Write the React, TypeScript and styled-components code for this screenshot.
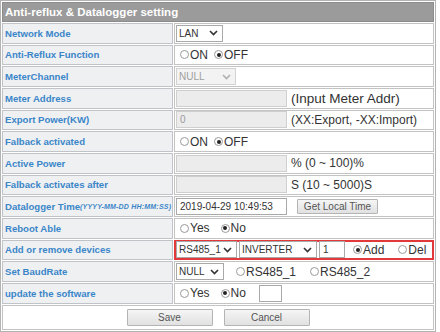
import React from "react";
import styled, { createGlobalStyle } from "styled-components";

const GlobalStyle = createGlobalStyle`
  html, body { margin: 0; padding: 0; background: #fff; }
  body { font-family: "Liberation Sans", Arial, sans-serif; }
  * { box-sizing: border-box; }
`;

const Panel = styled.div`
  width: 436px;
  display: grid;
  grid-template-columns: 171px 260px;
  grid-template-rows: 20px repeat(13, 20.67px) 25px;
  gap: 1px;
  padding: 1px;
  border: 1px solid #b3b3b3;
  background: #fff;
`;

const Header = styled.div`
  grid-column: 1 / -1;
  background: #9b9b9b;
  border: 1px solid #8c8c8c;
  color: #fff;
  font-weight: bold;
  font-size: 11.5px;
  padding: 0 2px;
  display: flex;
  align-items: center;
`;

const LabelCell = styled.div`
  background: #eef0f2;
  border: 1px solid #c0c4c8;
  color: #3b86c9;
  font-weight: bold;
  font-size: 9.6px;
  padding-left: 2px;
  display: flex;
  align-items: center;
  white-space: nowrap;
  overflow: hidden;
`;

const Small = styled.span`
  font-size: 7px;
  font-style: italic;
  letter-spacing: 0.2px;
`;

const ValueCell = styled.div<{ $highlight?: boolean }>`
  background: #fff;
  border: ${(p) => (p.$highlight ? "2px solid #e23a3a" : "1px solid #c3c3c3")};
  display: flex;
  align-items: center;
  padding-left: ${(p) => (p.$highlight ? 0 : 1)}px;
  color: #333;
  font-size: 12px;
  white-space: nowrap;
`;

const SelectBox = styled.div<{ $w: number; $disabled?: boolean; $ml?: number }>`
  width: ${(p) => p.$w}px;
  height: 17px;
  margin-left: ${(p) => p.$ml ?? 0}px;
  flex-shrink: 0;
  border: 1px solid ${(p) => (p.$disabled ? "#d2d2d2" : "#a9a9a9")};
  background: ${(p) => (p.$disabled ? "#f3f3f3" : "#fff")};
  color: ${(p) => (p.$disabled ? "#a0a0a0" : "#333")};
  font-size: 10px;
  display: flex;
  align-items: center;
  justify-content: space-between;
  padding: 0 4px 0 2px;
`;

const TextInput = styled.input<{ $w: number; $disabled?: boolean; $ml?: number }>`
  width: ${(p) => p.$w}px;
  height: 17px;
  margin: 0 0 0 ${(p) => p.$ml ?? 0}px;
  flex-shrink: 0;
  border: 1px solid ${(p) => (p.$disabled ? "#cfcfcf" : "#a9a9a9")};
  background: ${(p) => (p.$disabled ? "#ececec" : "#fff")};
  color: ${(p) => (p.$disabled ? "#9a9a9a" : "#333")};
  font-family: "Liberation Sans", Arial, sans-serif;
  font-size: 10px;
  padding: 0 3px;
  outline: none;
`;

const Note = styled.span<{ $size?: number }>`
  margin-left: 4px;
  font-size: ${(p) => p.$size ?? 12}px;
  color: #333;
`;

const Group = styled.div<{ $gap: number; $ml?: number }>`
  display: flex;
  align-items: center;
  gap: ${(p) => p.$gap}px;
  margin-left: ${(p) => p.$ml ?? 0}px;
`;

const Option = styled.span`
  display: inline-flex;
  align-items: center;
  gap: 1px;
  font-size: 12px;
  color: #333;
`;

const RadioDot = styled.span<{ $checked?: boolean }>`
  width: 9px;
  height: 9px;
  border-radius: 50%;
  border: 1px solid #9a9a9a;
  background: #fff;
  position: relative;
  flex-shrink: 0;
  &::after {
    content: "";
    display: ${(p) => (p.$checked ? "block" : "none")};
    position: absolute;
    inset: 1.5px;
    border-radius: 50%;
    background: #222;
  }
`;

const Btn = styled.button<{ $w: number; $h: number; $ml?: number }>`
  width: ${(p) => p.$w}px;
  height: ${(p) => p.$h}px;
  margin-left: ${(p) => p.$ml ?? 0}px;
  border: 1px solid #b4b4b4;
  border-radius: 1px;
  background: linear-gradient(#f5f5f5, #e1e1e1);
  font-family: "Liberation Sans", Arial, sans-serif;
  font-size: 10px;
  color: #555;
  padding: 0;
`;

const ButtonRow = styled.div`
  grid-column: 1 / -1;
  border: 1px solid #c3c3c3;
  display: flex;
  justify-content: center;
  align-items: center;
  gap: 11px;
`;

const Chevron = ({ color }: { color: string }) => (
  <svg width="9" height="6" viewBox="0 0 9 6">
    <polyline points="1,1 4.5,4.5 8,1" fill="none" stroke={color} strokeWidth="1.6" />
  </svg>
);

const Select = ({ value, w, disabled, ml }: { value: string; w: number; disabled?: boolean; ml?: number }) => (
  <SelectBox $w={w} $disabled={disabled} $ml={ml}>
    <span>{value}</span>
    <Chevron color={disabled ? "#b0b0b0" : "#333"} />
  </SelectBox>
);

const Radio = ({ label, checked }: { label: string; checked?: boolean }) => (
  <Option>
    <RadioDot $checked={checked} />
    {label}
  </Option>
);

export default function App() {
  return (
    <>
      <GlobalStyle />
      <Panel>
        <Header>Anti-reflux &amp; Datalogger setting</Header>

        <LabelCell>Network Mode</LabelCell>
        <ValueCell>
          <Select value="LAN" w={47} />
        </ValueCell>

        <LabelCell>Anti-Reflux Function</LabelCell>
        <ValueCell>
          <Group $gap={6} $ml={4}>
            <Radio label="ON" />
            <Radio label="OFF" checked />
          </Group>
        </ValueCell>

        <LabelCell>MeterChannel</LabelCell>
        <ValueCell>
          <Select value="NULL" w={60} disabled />
        </ValueCell>

        <LabelCell>Meter Address</LabelCell>
        <ValueCell>
          <TextInput $w={111} $disabled readOnly defaultValue="" />
          <Note $size={13.5}>(Input Meter Addr)</Note>
        </ValueCell>

        <LabelCell>Export Power(KW)</LabelCell>
        <ValueCell>
          <TextInput $w={111} $disabled readOnly defaultValue="0" />
          <Note>(XX:Export, -XX:Import)</Note>
        </ValueCell>

        <LabelCell>Falback activated</LabelCell>
        <ValueCell>
          <Group $gap={6} $ml={4}>
            <Radio label="ON" />
            <Radio label="OFF" checked />
          </Group>
        </ValueCell>

        <LabelCell>Active Power</LabelCell>
        <ValueCell>
          <TextInput $w={111} $disabled readOnly defaultValue="" />
          <Note>% (0 ~ 100)%</Note>
        </ValueCell>

        <LabelCell>Falback activates after</LabelCell>
        <ValueCell>
          <TextInput $w={111} $disabled readOnly defaultValue="" />
          <Note>S (10 ~ 5000)S</Note>
        </ValueCell>

        <LabelCell>
          Datalogger Time<Small>(YYYY-MM-DD HH:MM:SS)</Small>
        </LabelCell>
        <ValueCell>
          <TextInput $w={111} readOnly defaultValue="2019-04-29 10:49:53" />
          <Btn $w={81} $h={15} $ml={10}>Get Local Time</Btn>
        </ValueCell>

        <LabelCell>Reboot Able</LabelCell>
        <ValueCell>
          <Group $gap={11} $ml={4}>
            <Radio label="Yes" />
            <Radio label="No" checked />
          </Group>
        </ValueCell>

        <LabelCell>Add or remove devices</LabelCell>
        <ValueCell $highlight>
          <Select value="RS485_1" w={61} />
          <Select value="INVERTER" w={78} ml={2} />
          <TextInput $w={26} $ml={2} readOnly defaultValue="1" />
          <Group $gap={14} $ml={8}>
            <Radio label="Add" checked />
            <Radio label="Del" />
          </Group>
        </ValueCell>

        <LabelCell>Set BaudRate</LabelCell>
        <ValueCell>
          <Select value="NULL" w={48} />
          <Group $gap={14} $ml={12}>
            <Radio label="RS485_1" />
            <Radio label="RS485_2" />
          </Group>
        </ValueCell>

        <LabelCell>update the software</LabelCell>
        <ValueCell>
          <Group $gap={11} $ml={4}>
            <Radio label="Yes" />
            <Radio label="No" checked />
          </Group>
          <TextInput $w={23} $ml={13} readOnly defaultValue="" />
        </ValueCell>

        <ButtonRow>
          <Btn $w={86} $h={17}>Save</Btn>
          <Btn $w={86} $h={17}>Cancel</Btn>
        </ButtonRow>
      </Panel>
    </>
  );
}
